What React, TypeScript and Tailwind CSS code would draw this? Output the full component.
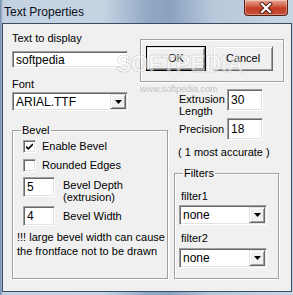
import React from 'react';

// classic win32 3d edges
const sunken =
  'bg-white border border-t-[#a0a0a0] border-l-[#a0a0a0] border-b-white border-r-white shadow-[inset_1px_1px_0_#696969,inset_-1px_-1px_0_#e3e3e3]';
const raised =
  'bg-[#f0f0f0] border border-t-[#e3e3e3] border-l-[#e3e3e3] border-b-[#696969] border-r-[#696969] shadow-[inset_1px_1px_0_#ffffff,inset_-1px_-1px_0_#a0a0a0]';
const etched = 'border border-[#a0a0a0] shadow-[inset_1px_1px_0_#ffffff,1px_1px_0_#ffffff]';

const Arrow = () => (
  <svg width="7" height="4" viewBox="0 0 7 4">
    <path d="M0 0h7L3.5 4z" fill="#000" />
  </svg>
);

const Edit: React.FC<{ value: string; className?: string; text?: string }> = ({ value, className = '', text = 'text-[12px]' }) => (
  <div className={`${sunken} flex items-center pl-[3px] ${text} ${className}`}>{value}</div>
);

const Select: React.FC<{ value: string; className?: string }> = ({ value, className = '' }) => (
  <div className={`${sunken} flex p-[1px] ${className}`}>
    <span className="flex-1 self-center pl-[2px] text-[12px] leading-[14px]">{value}</span>
    <div className={`${raised} w-[16px] flex items-center justify-center`}>
      <Arrow />
    </div>
  </div>
);

const Check: React.FC<{ checked?: boolean; label: string }> = ({ checked, label }) => (
  <div className="flex items-center h-[13px]">
    <div className={`${sunken} w-[13px] h-[13px] flex items-center justify-center`}>
      {checked && (
        <svg width="7" height="7" viewBox="0 0 7 7">
          <path d="M0 3.5l2.3 2.3L7 1" stroke="#000" strokeWidth="1.7" fill="none" />
        </svg>
      )}
    </div>
    <span className="ml-[6px] leading-[13px]">{label}</span>
  </div>
);

const Group: React.FC<{ label: string; className?: string; children: React.ReactNode }> = ({ label, className = '', children }) => (
  <div className={`relative ${etched} ${className}`}>
    <span className="absolute -top-[7px] left-[8px] bg-[#f0f0f0] px-[1px] leading-[13px]">{label}</span>
    {children}
  </div>
);

const Button: React.FC<{ label: string; isDefault?: boolean }> = ({ label, isDefault }) =>
  isDefault ? (
    <div className="w-[60px] h-[25px] border border-black">
      <div className={`${raised} w-full h-full flex items-center justify-center`}>{label}</div>
    </div>
  ) : (
    <div className={`${raised} w-[60px] h-[25px] flex items-center justify-center`}>{label}</div>
  );

export default function App() {
  return (
    <div className="relative w-[293px] h-[295px] overflow-hidden flex flex-col font-['Liberation_Sans',Arial,sans-serif] text-[11px] text-black bg-[linear-gradient(90deg,#6f89ad_0px,#c3d1e2_3px,#c6d4e3_35%,#93aac6_50%,#8aa2c0_58%,#b7c7da_72%,#c9d6e4_100%)]">
      {/* title bar */}
      <div className="h-[23px] flex items-start justify-between pl-[4px] pr-[5px]">
        <span className="mt-[5px] text-[12px] leading-[14px] text-[#0b1020]">Text Properties</span>
        <div className="w-[44px] h-[16px] rounded-b-[4px] border border-t-0 border-[#5c1d12] bg-[linear-gradient(180deg,#e9a796_0%,#d46a52_35%,#c23d22_55%,#c4503a_100%)] flex items-center justify-center shadow-[inset_0_0_0_1px_rgba(255,255,255,0.35)]">
          <svg width="14" height="12" viewBox="0 0 14 12">
            <path d="M3 2l8 8M11 2l-8 8" stroke="#4a1a12" strokeWidth="4" strokeLinecap="square" />
            <path d="M3 2l8 8M11 2l-8 8" stroke="#ffffff" strokeWidth="2.2" strokeLinecap="square" />
          </svg>
        </div>
      </div>

      {/* client area */}
      <div className="relative ml-[2px] mr-[1px] h-[269px] border border-[#3c4c62] bg-[#f0f0f0] flex pl-[9px]">
        {/* left column */}
        <div className="w-[128px] pt-[8px] flex flex-col">
          <span className="leading-[13px] h-[13px]">Text to display</span>
          <Edit value="softpedia" className="mt-[6px] w-[116px] h-[17px]" />
          <span className="mt-[10px] leading-[13px] h-[13px]">Font</span>
          <Select value="ARIAL.TTF" className="mt-[1px] w-[116px] h-[19px]" />

          <Group label="Bevel" className="mt-[19px] w-[156px] h-[149px] shrink-0 pl-[10px] pt-[9px] flex flex-col">
            <Check checked label="Enable Bevel" />
            <div className="mt-[6px]">
              <Check label="Rounded Edges" />
            </div>
            <div className="mt-[5px] flex items-start">
              <Edit value="5" className="w-[32px] h-[20px]" />
              <span className="ml-[8px] mt-[2px] leading-[12px]">
                Bevel Depth
                <br />
                (extrusion)
              </span>
            </div>
            <div className="mt-[3px] flex items-start">
              <Edit value="4" className="w-[32px] h-[20px]" />
              <span className="ml-[8px] mt-[4px] leading-[13px]">Bevel Width</span>
            </div>
            <p className="mt-[4px] -ml-[6px] leading-[14px]">
              !!! large bevel width can cause
              <br />
              the frontface not to be drawn
            </p>
          </Group>
        </div>

        {/* right column */}
        <div className="w-[145px] pt-[15px] flex flex-col">
          <div className={`${etched} w-[144px] h-[43px] pt-[6px] pl-[5px] flex gap-[7px]`}>
            <Button label="OK" isDefault />
            <Button label="Cancel" />
          </div>

          <div className="mt-[7px] ml-[39px] flex items-start">
            <span className="w-[48px] mt-[4px] leading-[12px]">
              Extrusion
              <br />
              Length
            </span>
            <Edit value="30" className="w-[36px] h-[22px]" />
          </div>

          <div className="mt-[1px] ml-[39px] flex items-start">
            <span className="w-[48px] mt-[5px] leading-[13px]">Precision</span>
            <Edit value="18" className="w-[36px] h-[22px]" />
          </div>

          <span className="mt-[6px] ml-[38px] leading-[13px]">( 1 most accurate )</span>

          <Group label="Filters" className="mt-[14px] ml-[34px] w-[105px] h-[106px] pt-[16px] pl-[4px] flex flex-col">
            <span className="ml-[2px] leading-[13px]">filter1</span>
            <Select value="none" className="mt-[2px] w-[88px] h-[20px]" />
            <span className="mt-[7px] ml-[2px] leading-[13px]">filter2</span>
            <Select value="none" className="mt-[3px] w-[88px] h-[20px]" />
          </Group>
        </div>

        {/* site watermark over the dialog */}
        <span className="absolute left-[113px] top-[27px] text-[23px] leading-[26px] font-bold tracking-[-0.5px] text-white/50 [-webkit-text-stroke:0.6px_rgba(150,150,150,0.45)] pointer-events-none">
          SOFTPEDIA
        </span>
        <span className="absolute left-[137px] top-[60px] text-[9px] leading-[10px] text-[#c4c4c4] pointer-events-none">
          www.softpedia.com
        </span>
      </div>
    </div>
  );
}
